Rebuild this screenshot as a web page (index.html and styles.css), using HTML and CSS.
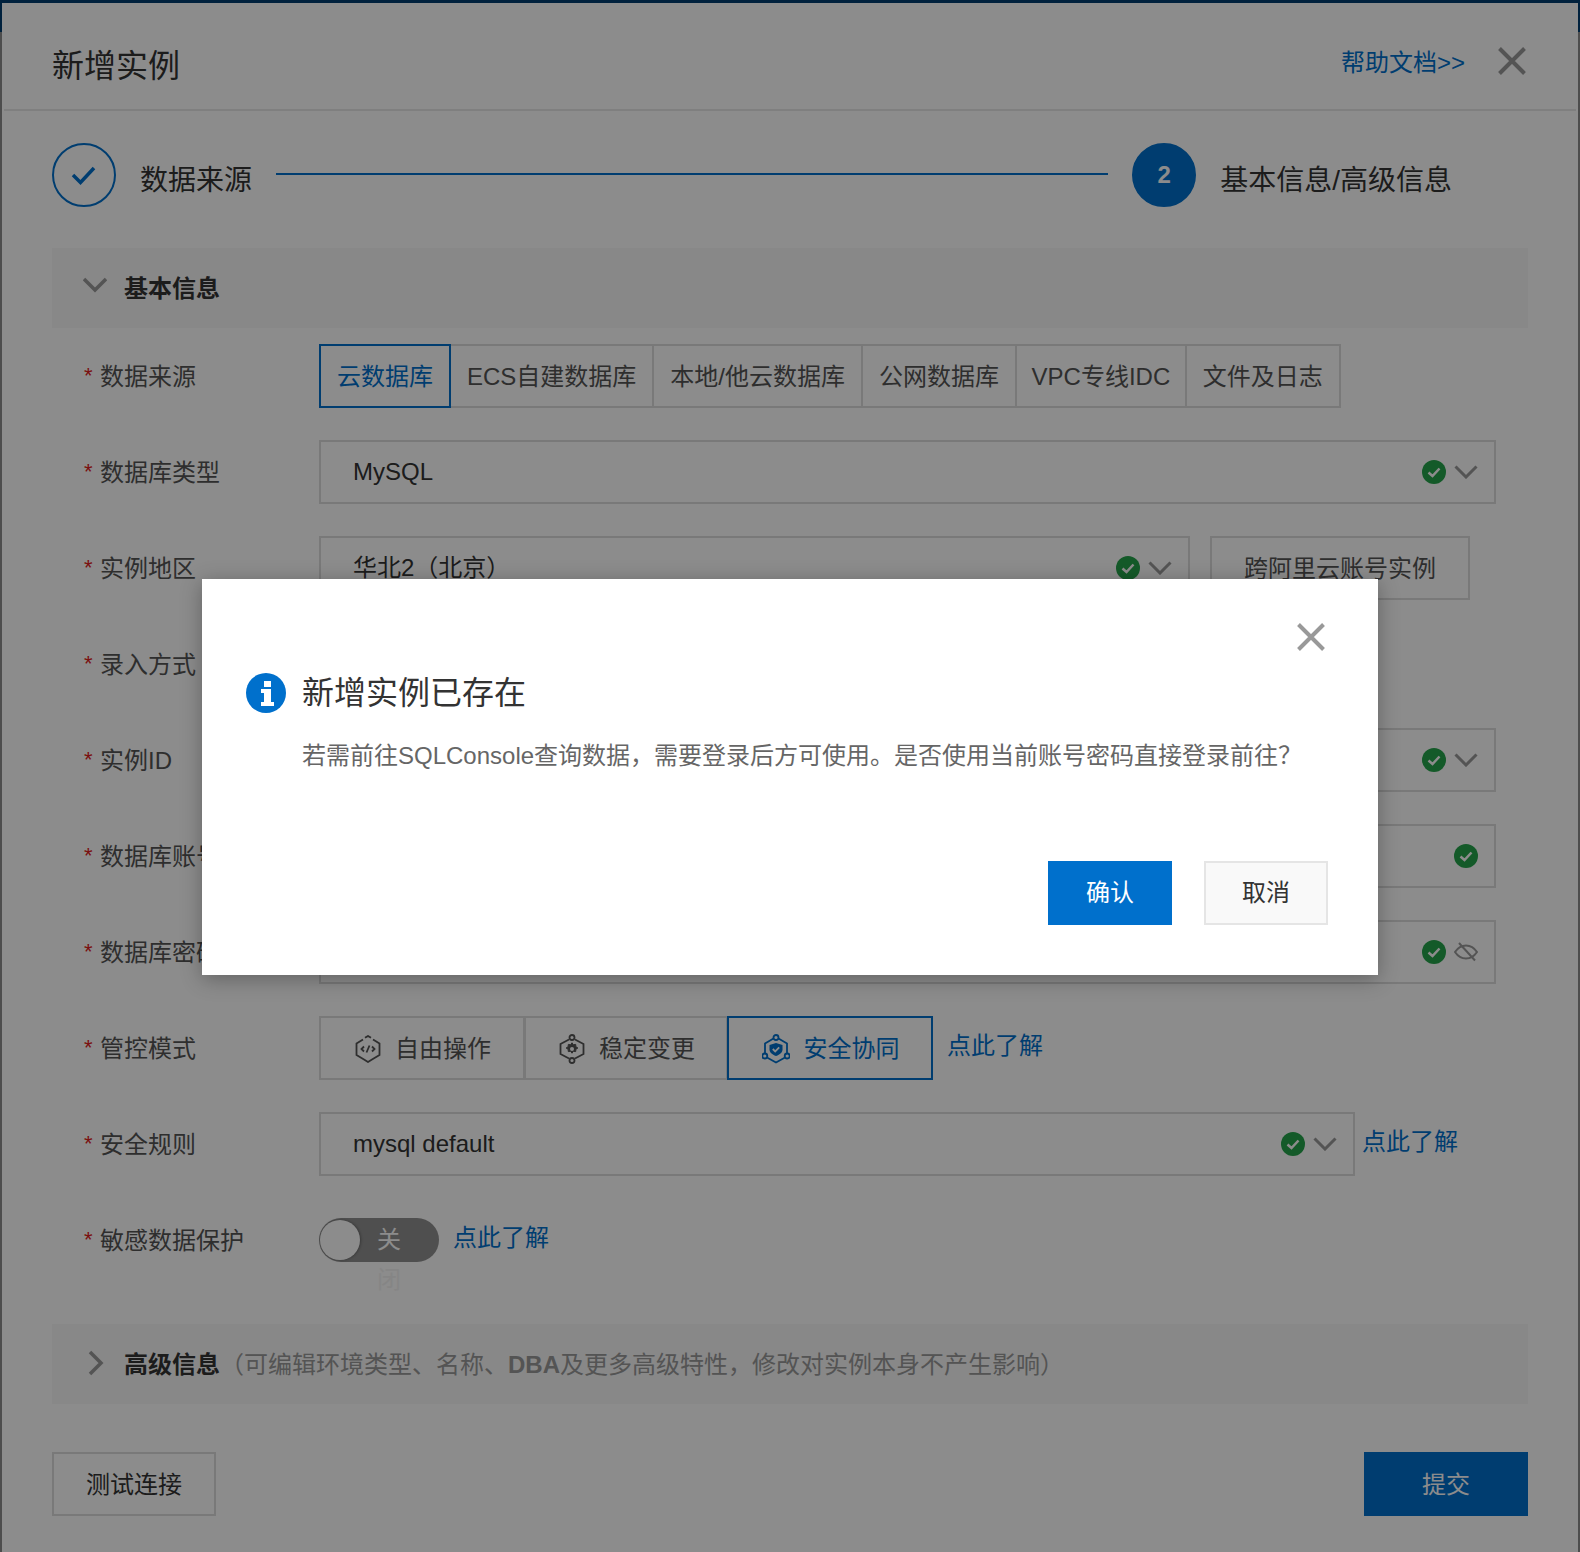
FILE: index.html
```html
<!DOCTYPE html>
<html lang="zh-CN">
<head>
<meta charset="utf-8">
<title>新增实例</title>
<link rel="stylesheet" href="styles.css">
</head>
<body>
<div class="page">
  <div class="topnav"></div>
  <div class="mask"></div>
  <div class="drawer">
    <header class="drawer-head">
      <h1 class="drawer-title">新增实例</h1>
      <a class="help">帮助文档&gt;&gt;</a>
      <svg class="x-icon" width="28" height="28" viewBox="0 0 28 28"><path d="M1.500 1.500l25 25M26.500 1.500l-25 25"/></svg>
    </header>
    <div class="drawer-body">
      <div class="steps">
        <span class="step-circle">
          <svg width="26" height="20" viewBox="0 0 26 20"><path d="M2 10l7.500 7.500L23 3"/></svg>
        </span>
        <span class="step-label">数据来源</span>
        <span class="step-line"></span>
        <span class="step-circle step-circle-on">2</span>
        <span class="step-label">基本信息/高级信息</span>
      </div>

      <div class="section-head">
        <svg class="chev-lg" width="24" height="16" viewBox="0 0 24 16"><path d="M1 2l11 11L23 2"/></svg>
        <b class="section-title">基本信息</b>
      </div>

      <div class="rows">
        <div class="row">
          <label class="label"><i class="star">*</i>数据来源</label>
          <div class="tabs">
            <span class="tab tab-on">云数据库</span>
            <span class="tab">ECS自建数据库</span>
            <span class="tab">本地/他云数据库</span>
            <span class="tab">公网数据库</span>
            <span class="tab tab-narrow">VPC专线IDC</span>
            <span class="tab">文件及日志</span>
          </div>
        </div>
        <div class="row">
          <label class="label"><i class="star">*</i>数据库类型</label>
          <div class="field field-full">
            <span class="value">MySQL</span>
            <svg class="ok" width="24" height="24" viewBox="0 0 24 24"><circle cx="12" cy="12" r="12"/><path d="M6.500 12.500l4 3.500 7-7.500"/></svg>
            <svg class="chev" width="24" height="14" viewBox="0 0 24 14"><path d="M1.500 1.500L12 12 22.500 1.500"/></svg>
          </div>
        </div>
        <div class="row">
          <label class="label"><i class="star">*</i>实例地区</label>
          <div class="field field-region">
            <span class="value">华北2（北京）</span>
            <svg class="ok" width="24" height="24" viewBox="0 0 24 24"><circle cx="12" cy="12" r="12"/><path d="M6.500 12.500l4 3.500 7-7.500"/></svg>
            <svg class="chev" width="24" height="14" viewBox="0 0 24 14"><path d="M1.500 1.500L12 12 22.500 1.500"/></svg>
          </div>
          <span class="btn-cross">跨阿里云账号实例</span>
        </div>
        <div class="row">
          <label class="label"><i class="star">*</i>录入方式</label>
        </div>
        <div class="row">
          <label class="label"><i class="star">*</i>实例ID</label>
          <div class="field field-full">
            <span class="value"></span>
            <svg class="ok" width="24" height="24" viewBox="0 0 24 24"><circle cx="12" cy="12" r="12"/><path d="M6.500 12.500l4 3.500 7-7.500"/></svg>
            <svg class="chev" width="24" height="14" viewBox="0 0 24 14"><path d="M1.500 1.500L12 12 22.500 1.500"/></svg>
          </div>
        </div>
        <div class="row">
          <label class="label"><i class="star">*</i>数据库账号</label>
          <div class="field field-full">
            <span class="value"></span>
            <svg class="ok" width="24" height="24" viewBox="0 0 24 24"><circle cx="12" cy="12" r="12"/><path d="M6.500 12.500l4 3.500 7-7.500"/></svg>
          </div>
        </div>
        <div class="row">
          <label class="label"><i class="star">*</i>数据库密码</label>
          <div class="field field-full">
            <span class="value"></span>
            <svg class="ok" width="24" height="24" viewBox="0 0 24 24"><circle cx="12" cy="12" r="12"/><path d="M6.500 12.500l4 3.500 7-7.500"/></svg>
            <svg class="eye" width="24" height="24" viewBox="0 0 24 24"><path d="M1 12c3-4.500 6.500-6.500 11-6.500s8 2 11 6.500c-3 4.500-6.500 6.500-11 6.500S4 16.500 1 12z"/><path d="M5 3l16 17.500"/></svg>
          </div>
        </div>
        <div class="row">
          <label class="label"><i class="star">*</i>管控模式</label>
          <div class="seg">
            <span class="seg-item seg-first">
              <svg class="seg-icon" width="26" height="28" viewBox="0 0 26 28"><path d="M8 4.500L1.500 8.500v11.500L9 24.500l4 2.500 4-2.500 7.500-4.500V8.500L18 4.500M10 2.800L13 1l3 1.800"/><path d="M9 11.500L6.500 14 9 16.500M17 11.500l2.500 2.500-2.500 2.500M14.500 10.500l-3 7"/></svg>
              自由操作
            </span>
            <span class="seg-item">
              <svg class="seg-icon" width="26" height="30" viewBox="0 0 26 30"><path d="M10 5.500L1.500 10v10l8.500 4.500M16 5.500l8.500 4.500v10L16 24.500"/><circle cx="13" cy="3.500" r="2.500"/><circle cx="13" cy="26.500" r="2.500"/><path class="gear" d="M13 8.800l1.300 1.900 2.400-.3.200 2.400 2 1.200-2 1.200-.2 2.400-2.400-.3-1.300 1.900-1.300-1.900-2.400.3-.2-2.400-2-1.200 2-1.200.2-2.400 2.400.3z"/><circle class="gear-hole" cx="13" cy="15" r="2"/></svg>
              稳定变更
            </span>
            <span class="seg-item seg-on">
              <svg class="seg-icon" width="28" height="30" viewBox="0 0 28 30"><path d="M16.500 4.500L25 9.500v10M11.500 4.500L3 9.500v10M5 23.500l9 5 9-5"/><circle cx="14" cy="3.500" r="2.500"/><circle cx="2.800" cy="22" r="2.500"/><circle cx="25.200" cy="22" r="2.500"/><path class="shield" d="M14 9l6.500 2v4.500c0 3-2.500 5-6.500 6.500-4-1.500-6.500-3.500-6.500-6.500V11z"/><path class="shield-check" d="M10.800 15l2.400 2.400 4-4"/></svg>
              安全协同
            </span>
          </div>
          <a class="link link-seg">点此了解</a>
        </div>
        <div class="row">
          <label class="label"><i class="star">*</i>安全规则</label>
          <div class="field field-rule">
            <span class="value">mysql default</span>
            <svg class="ok" width="24" height="24" viewBox="0 0 24 24"><circle cx="12" cy="12" r="12"/><path d="M6.500 12.500l4 3.500 7-7.500"/></svg>
            <svg class="chev" width="24" height="14" viewBox="0 0 24 14"><path d="M1.500 1.500L12 12 22.500 1.500"/></svg>
          </div>
          <a class="link link-rule">点此了解</a>
        </div>
        <div class="row">
          <label class="label"><i class="star">*</i>敏感数据保护</label>
          <div class="switch">
            <span class="knob"></span>
            <span class="switch-text">关闭</span>
          </div>
          <a class="link link-switch">点此了解</a>
        </div>
      </div>

      <div class="section-head section-head-adv">
        <svg class="chev-lg" width="24" height="26" viewBox="0 0 24 26"><path d="M7 2l11 11L7 24"/></svg>
        <b class="section-title">高级信息</b><span class="section-note">（可编辑环境类型、名称、<b>DBA</b>及更多高级特性，修改对实例本身不产生影响）</span>
      </div>

      <div class="drawer-foot">
        <span class="btn btn-test">测试连接</span>
        <span class="btn btn-submit">提交</span>
      </div>
    </div>
  </div>

  <div class="dialog-mask">
    <div class="dialog">
      <svg class="x-icon dialog-close" width="28" height="28" viewBox="0 0 28 28"><path d="M1.500 1.500l25 25M26.500 1.500l-25 25"/></svg>
      <div class="dialog-head">
        <svg class="info" width="40" height="40" viewBox="0 0 40 40"><circle cx="20" cy="20" r="20"/><path d="M18 8h7v6h-7zM15 16h10v13h3v4H15v-4h3V20h-3z"/></svg>
        <h2 class="dialog-title">新增实例已存在</h2>
      </div>
      <p class="dialog-text">若需前往SQLConsole查询数据，需要登录后方可使用。是否使用当前账号密码直接登录前往？</p>
      <div class="dialog-foot">
        <span class="dbtn dbtn-primary">确认</span>
        <span class="dbtn dbtn-normal">取消</span>
      </div>
    </div>
  </div>
</div>
</body>
</html>
```

FILE: styles.css
```css
* { box-sizing: border-box; }
html, body { margin: 0; padding: 0; }
body {
  font-family: "Liberation Sans", "Noto Sans CJK SC", sans-serif;
  font-size: 24px;
  line-height: 36px;
  color: #555;
}
svg { display: block; flex: none; fill: none; }
h1, h2, p { margin: 0; font-weight: 400; }

.page { position: relative; width: 1580px; height: 1552px; overflow: hidden; background: #fff; }
.topnav { height: 32px; background: #0070cc; }
.mask { position: absolute; inset: 0; background: rgba(0, 0, 0, .45); }

.drawer { position: absolute; top: 3px; left: 2px; right: 2px; bottom: 0; background: #fff; }
.drawer-head {
  height: 108px;
  margin: 0 2px;
  padding: 43px 50px 0 48px;
  display: flex;
  align-items: flex-start;
  border-bottom: 2px solid #e8e8e8;
}
.drawer-title { font-size: 32px; line-height: 40px; color: #333; flex: 1; }
.help { line-height: 34px; color: #0070cc; margin-right: 33px; }
.x-icon path { stroke: #999; stroke-width: 4; }
.drawer-head .x-icon { margin-top: 1px; }

.drawer-body { padding: 32px 50px 0; }
.steps { display: flex; align-items: center; height: 64px; padding-right: 76px; }
.step-circle {
  width: 64px; height: 64px; border-radius: 50%;
  border: 2px solid #0070cc;
  display: flex; align-items: center; justify-content: center;
  font-weight: 700; font-size: 24px; flex: none;
}
.step-circle svg path { stroke: #0070cc; stroke-width: 3.500; }
.step-circle-on { background: #0070cc; color: #fff; }
.step-label { font-size: 28px; line-height: 40px; color: #333; margin-left: 24px; padding-top: 12px; white-space: nowrap; }
.step-line { flex: 1; height: 2px; background: #0070cc; margin: -2px 24px 0; }

.section-head {
  height: 80px; margin-top: 41px; padding-left: 31px;
  display: flex; align-items: center;
  background: #f7f7f7;
}
.chev-lg { margin-right: 17px; }
.chev-lg path { stroke: #999; stroke-width: 3.500; }
.section-head > .chev-lg { margin-top: -6px; }
.section-title { color: #333; font-weight: 700; padding-top: 2px; }
.section-head-adv { margin-top: 52px; }
.section-head-adv .chev-lg { margin-top: -2px; }
.section-note { color: #999; padding-top: 2px; }
.section-note b { font-weight: 700; }

.rows { display: flex; flex-direction: column; gap: 32px; padding-top: 16px; }
.row { display: flex; align-items: center; height: 64px; }
.label { width: 267px; padding-left: 31px; flex: none; color: #555; white-space: nowrap; }
.star { display: inline-block; width: 17px; padding-left: 1px; font-style: normal; font-size: 22px; color: #e02020; vertical-align: 2px; }

.tabs { display: flex; height: 64px; }
.tab {
  display: flex; align-items: center; white-space: nowrap;
  padding: 2px 16px 0;
  border: 2px solid #dcdcdc;
  margin-left: -2px;
  color: #555;
}
.tab:first-child { margin-left: 0; }
.tab-narrow { padding: 2px 14.500px 0; }
.tab-on { border-color: #0070cc; color: #0070cc; position: relative; }

.field {
  height: 64px; display: flex; align-items: center;
  padding: 0 16px 0 32px;
  border: 2px solid #dcdcdc;
}
.field-full { width: 1177px; }
.field-region { width: 871px; }
.field-rule { width: 1036px; }
.value { flex: 1; color: #333; }
.ok circle { fill: #26a44c; }
.ok path { stroke: #fff; stroke-width: 2.500; }
.chev { margin-left: 8px; }
.chev path { stroke: #999; stroke-width: 3; }
.eye { margin-left: 8px; }
.eye path { stroke: #999; stroke-width: 2; }
.btn-cross {
  margin-left: 20px; height: 64px; padding: 2px 32px 0;
  display: flex; align-items: center;
  border: 2px solid #dcdcdc; color: #555; white-space: nowrap;
}

.seg { display: flex; height: 64px; }
.seg-item {
  width: 204px; display: flex; align-items: center; justify-content: center; gap: 14px;
  padding: 2px 0 0 2px;
  border: 2px solid #dcdcdc; margin-left: -1px; color: #555;
  white-space: nowrap;
}
.seg-first { margin-left: 0; width: 206px; }
.seg-icon path, .seg-icon circle { stroke: #555; stroke-width: 1.800; }
.seg-on { border-color: #0070cc; color: #0070cc; width: 206px; padding-left: 1px; }
.seg-on .seg-icon path, .seg-on .seg-icon circle { stroke: #0070cc; }
.seg-icon .gear { fill: #555; stroke: #555; stroke-width: 1; }
.seg-icon .gear-hole { fill: #fff; stroke: none; }
.seg-on .seg-icon .shield { fill: #0070cc; stroke: none; }
.seg-on .seg-icon .shield-check { stroke: #fff; }
.link { color: #0070cc; white-space: nowrap; margin-bottom: 4px; }
.link-seg { margin-left: 14px; }
.link-rule { margin-left: 7px; }
.link-switch { margin-left: 14px; }

.switch {
  position: relative;
  width: 120px; height: 44px; border-radius: 22px;
  background: #919191; flex: none;
}
.knob {
  position: absolute; left: 1px; top: 2px;
  width: 40px; height: 40px; border-radius: 50%;
  background: #fff;
  box-shadow: 1px 0 3px rgba(0, 0, 0, .3);
}
.switch-text {
  position: absolute; left: 58px; top: 2px;
  width: 24px; line-height: 40px; color: #f3f3f3;
}
.switch-text::first-line { color: #fff; }

.drawer-foot { display: flex; justify-content: space-between; margin-top: 48px; }
.btn {
  width: 164px; height: 64px; padding-top: 2px; display: flex; align-items: center; justify-content: center;
}
.btn-test { border: 2px solid #dcdcdc; color: #333; }
.btn-submit { background: #0070cc; color: #fff; }

.dialog-mask {
  position: absolute; inset: 0;
  background: rgba(0, 0, 0, .45);
  display: flex; align-items: center; justify-content: center;
}
.dialog {
  position: relative;
  width: 1176px; height: 396px; margin-top: 2px;
  padding: 94px 50px 50px 44px;
  background: #fff;
  display: flex; flex-direction: column;
  box-shadow: 0 4px 20px rgba(0, 0, 0, .3);
}
.dialog-close { position: absolute; top: 44px; left: 1095px; }
.dialog-head { display: flex; align-items: center; gap: 16px; }
.info circle { fill: #0070cc; }
.info path { fill: #fff; }
.dialog-title { font-size: 32px; line-height: 40px; color: #333; }
.dialog-text { margin: 25px 0 0 56px; color: #666; white-space: nowrap; }
.dialog-foot { margin-top: auto; display: flex; justify-content: flex-end; gap: 32px; }
.dbtn { width: 124px; height: 64px; display: flex; align-items: center; justify-content: center; }
.dbtn-primary { background: #0070cc; color: #fff; }
.dbtn-normal { background: #f9f9f9; border: 2px solid #e5e5e5; color: #333; }
```
